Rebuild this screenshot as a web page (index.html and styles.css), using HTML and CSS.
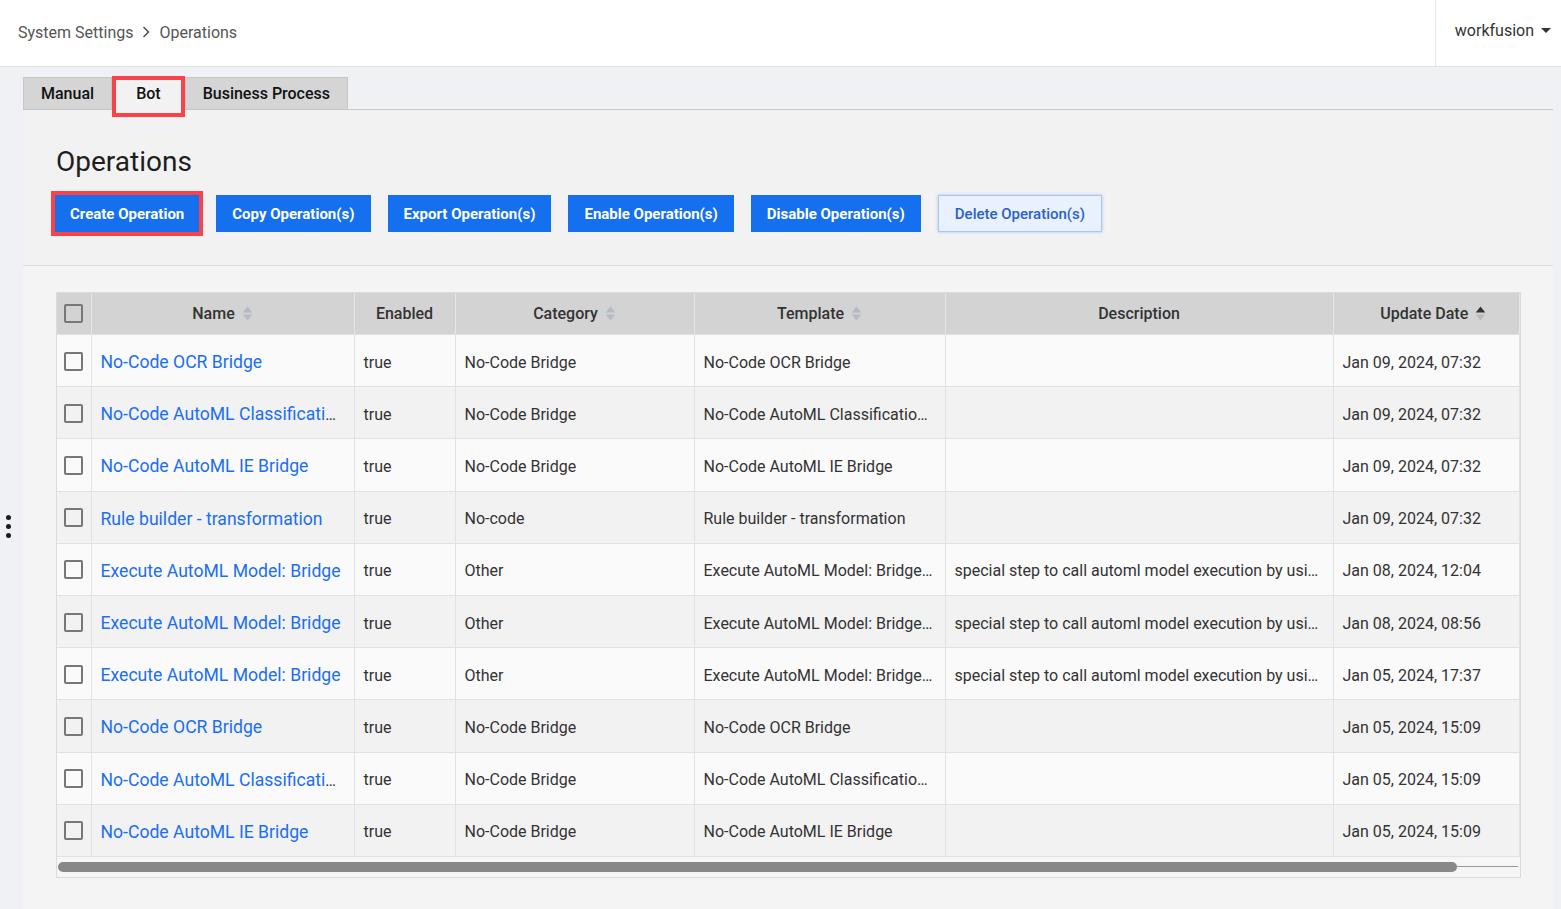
FILE: index.html
```html
<!DOCTYPE html>
<html lang="en">
<head>
    <meta charset="UTF-8">
    <title>Operations - System Settings</title>
    <link rel="stylesheet" href="styles.css">
</head>
<body>
    <header class="topbar">
        <nav class="crumbs">
            <span>System Settings</span>
            <svg class="chevron" viewBox="0 0 8 12"><path d="M1.5 1 6.5 6 1.5 11" fill="none" stroke="#555" stroke-width="1.6"/></svg>
            <span>Operations</span>
        </nav>
        <div class="user">
            <span>workfusion</span>
            <svg class="caret" viewBox="0 0 10 5"><path d="M0 0h10L5 5z" fill="#333"/></svg>
        </div>
    </header>

    <div class="handle"><i></i><i></i><i></i></div>

    <main class="page">
        <div class="tabs">
            <a class="tab">Manual</a>
            <a class="tab tab-active">Bot</a>
            <a class="tab">Business Process</a>
            <div class="tab-fill"></div>
        </div>

        <section class="panel">
            <div class="panel-head">
                <h1>Operations</h1>
                <div class="actions">
                    <button class="btn btn-marked">Create Operation</button>
                    <button class="btn">Copy Operation(s)</button>
                    <button class="btn">Export Operation(s)</button>
                    <button class="btn">Enable Operation(s)</button>
                    <button class="btn">Disable Operation(s)</button>
                    <button class="btn btn-muted">Delete Operation(s)</button>
                </div>
            </div>

            <div class="panel-body">
                <div class="grid">
                    <table>
                        <colgroup>
                            <col class="c-check">
                            <col class="c-name">
                            <col class="c-enabled">
                            <col class="c-category">
                            <col class="c-template">
                            <col class="c-desc">
                            <col>
                        </colgroup>
                        <thead>
                            <tr>
                                <th class="check"><input type="checkbox" class="cb"></th>
                                <th><span class="th-in">Name <svg class="sort" viewBox="0 0 10 16"><path d="M.5 7 5 1.5 9.5 7z"/><path d="M.5 9 5 14.5 9.5 9z"/></svg></span></th>
                                <th>Enabled</th>
                                <th><span class="th-in">Category <svg class="sort" viewBox="0 0 10 16"><path d="M.5 7 5 1.5 9.5 7z"/><path d="M.5 9 5 14.5 9.5 9z"/></svg></span></th>
                                <th><span class="th-in">Template <svg class="sort" viewBox="0 0 10 16"><path d="M.5 7 5 1.5 9.5 7z"/><path d="M.5 9 5 14.5 9.5 9z"/></svg></span></th>
                                <th>Description</th>
                                <th class="th-date"><span class="th-in">Update Date <svg class="sort" viewBox="0 0 10 16"><path class="on" d="M.5 7 5 1.5 9.5 7z"/><path d="M.5 9 5 14.5 9.5 9z"/></svg></span></th>
                            </tr>
                        </thead>
                        <tbody>
                            <tr>
                                <td class="check"><input type="checkbox" class="cb"></td>
                                <td><a class="op-link" href="#">No-Code OCR Bridge</a></td>
                                <td>true</td>
                                <td>No-Code Bridge</td>
                                <td>No-Code OCR Bridge</td>
                                <td></td>
                                <td>Jan 09, 2024, 07:32</td>
                            </tr>
                            <tr>
                                <td class="check"><input type="checkbox" class="cb"></td>
                                <td><a class="op-link" href="#">No-Code AutoML Classification Bridge</a></td>
                                <td>true</td>
                                <td>No-Code Bridge</td>
                                <td>No-Code AutoML Classification Bridge</td>
                                <td></td>
                                <td>Jan 09, 2024, 07:32</td>
                            </tr>
                            <tr>
                                <td class="check"><input type="checkbox" class="cb"></td>
                                <td><a class="op-link" href="#">No-Code AutoML IE Bridge</a></td>
                                <td>true</td>
                                <td>No-Code Bridge</td>
                                <td>No-Code AutoML IE Bridge</td>
                                <td></td>
                                <td>Jan 09, 2024, 07:32</td>
                            </tr>
                            <tr>
                                <td class="check"><input type="checkbox" class="cb"></td>
                                <td><a class="op-link" href="#">Rule builder - transformation</a></td>
                                <td>true</td>
                                <td>No-code</td>
                                <td>Rule builder - transformation</td>
                                <td></td>
                                <td>Jan 09, 2024, 07:32</td>
                            </tr>
                            <tr>
                                <td class="check"><input type="checkbox" class="cb"></td>
                                <td><a class="op-link" href="#">Execute AutoML Model: Bridge</a></td>
                                <td>true</td>
                                <td>Other</td>
                                <td>Execute AutoML Model: Bridge Template</td>
                                <td>special step to call automl model execution by using bridge</td>
                                <td>Jan 08, 2024, 12:04</td>
                            </tr>
                            <tr>
                                <td class="check"><input type="checkbox" class="cb"></td>
                                <td><a class="op-link" href="#">Execute AutoML Model: Bridge</a></td>
                                <td>true</td>
                                <td>Other</td>
                                <td>Execute AutoML Model: Bridge Template</td>
                                <td>special step to call automl model execution by using bridge</td>
                                <td>Jan 08, 2024, 08:56</td>
                            </tr>
                            <tr>
                                <td class="check"><input type="checkbox" class="cb"></td>
                                <td><a class="op-link" href="#">Execute AutoML Model: Bridge</a></td>
                                <td>true</td>
                                <td>Other</td>
                                <td>Execute AutoML Model: Bridge Template</td>
                                <td>special step to call automl model execution by using bridge</td>
                                <td>Jan 05, 2024, 17:37</td>
                            </tr>
                            <tr>
                                <td class="check"><input type="checkbox" class="cb"></td>
                                <td><a class="op-link" href="#">No-Code OCR Bridge</a></td>
                                <td>true</td>
                                <td>No-Code Bridge</td>
                                <td>No-Code OCR Bridge</td>
                                <td></td>
                                <td>Jan 05, 2024, 15:09</td>
                            </tr>
                            <tr>
                                <td class="check"><input type="checkbox" class="cb"></td>
                                <td><a class="op-link" href="#">No-Code AutoML Classification Bridge</a></td>
                                <td>true</td>
                                <td>No-Code Bridge</td>
                                <td>No-Code AutoML Classification Bridge</td>
                                <td></td>
                                <td>Jan 05, 2024, 15:09</td>
                            </tr>
                            <tr>
                                <td class="check"><input type="checkbox" class="cb"></td>
                                <td><a class="op-link" href="#">No-Code AutoML IE Bridge</a></td>
                                <td>true</td>
                                <td>No-Code Bridge</td>
                                <td>No-Code AutoML IE Bridge</td>
                                <td></td>
                                <td>Jan 05, 2024, 15:09</td>
                            </tr>
                        </tbody>
                    </table>
                    <div class="hscroll"><div class="thumb"></div><div class="track"></div></div>
                </div>
            </div>
        </section>
    </main>
</body>
</html>
```

FILE: styles.css
```css
body {
    margin: 0;
    font-family: Roboto, "Liberation Sans", sans-serif;
    font-size: 16px;
    color: #333;
    background: #f0f1f5;
    overflow: hidden;
}

/* top bar */
.topbar {
    height: 66px;
    display: flex;
    background: #fff;
    border-bottom: 1px solid #e3e3e3;
}
.crumbs {
    flex: 1;
    display: flex;
    align-items: center;
    gap: 9px;
    padding: 0 0 2px 18px;
    color: #555;
}
.chevron {
    width: 8px;
    height: 12px;
}
.user {
    display: flex;
    align-items: center;
    gap: 7px;
    padding: 0 10px 6px 19px;
    border-left: 1px solid #e6e6e6;
    color: #333;
}
.caret {
    width: 10px;
    height: 5px;
}

.handle {
    position: absolute;
    left: 6px;
    top: 515px;
    display: flex;
    flex-direction: column;
    gap: 4px;
}
.handle i {
    width: 5px;
    height: 5px;
    border-radius: 50%;
    background: #1c1c1c;
}

/* tabs */
.page {
    padding: 10px 8px 0 23px;
}
.tabs {
    display: flex;
    height: 33px;
}
.tab {
    display: flex;
    align-items: center;
    padding: 0 17px;
    background: #d5d5d5;
    border: 1px solid #c6c6c6;
    color: #111;
    font-weight: 500;
}
.tab-active {
    position: relative;
    padding: 0 23px;
    background: #f2f2f2;
    border-color: #f2f2f2;
}
.tab-active::after {
    content: "";
    position: absolute;
    left: -1px;
    right: -1px;
    top: -2px;
    bottom: -8px;
    border: 4px solid #fb4248;
}
.tab-fill {
    flex: 1;
    border-bottom: 1px solid #c8c8c8;
}

/* panel */
.panel {
    background: #f4f4f4;
    min-height: 800px;
}
.panel-head {
    background: #f2f2f2;
    padding: 35px 33px 33px 32px;
    border-bottom: 1px solid #dcdcdc;
}
h1 {
    margin: 0 0 16px 1px;
    font-size: 28px;
    font-weight: 400;
    line-height: 34px;
    color: #1e1e1e;
}
.actions {
    display: flex;
    gap: 17px;
}
.btn {
    height: 37px;
    padding: 0 16px;
    border: 0;
    background: #1570ef;
    color: #fff;
    font-family: Roboto, "Liberation Sans", sans-serif;
    font-size: 15px;
    font-weight: 700;
}
.btn-marked {
    padding: 0 15px;
    outline: 4px solid #fb4248;
}
.btn-muted {
    background: #e9f1fe;
    color: #2a62c8;
    border: 1px solid #a9c6f6;
    box-shadow: 0 0 3px rgba(80, 140, 240, .45);
    font-weight: 500;
}

.panel-body {
    padding: 26px 32px 30px 33px;
}

/* grid */
.grid {
    border: 1px solid #dcdcdc;
    background: #f6f6f6;
    padding-bottom: 5px;
}
table {
    width: 100%;
    border-collapse: collapse;
    table-layout: fixed;
}
.c-check { width: 34px; }
.c-name { width: 263px; }
.c-enabled { width: 101px; }
.c-category { width: 239px; }
.c-template { width: 251px; }
.c-desc { width: 388px; }

th {
    height: 41px;
    padding: 0 10px;
    background: #d3d3d3;
    border-right: 1px solid #e6e6e6;
    border-bottom: 1px solid #e2e2e2;
    font-weight: 500;
    color: #333;
    text-align: center;
}
th.th-date {
    padding-left: 24px;
}
.th-in {
    display: inline-flex;
    align-items: center;
    gap: 7px;
}
.sort {
    width: 11px;
    height: 17px;
    fill: #b6bbc2;
}
.sort .on {
    fill: #333;
}
td {
    height: 48.2px;
    padding: 3px 10px 0 9px;
    border-right: 1px solid #e2e2e2;
    border-bottom: 1px solid #e2e2e2;
    white-space: nowrap;
    overflow: hidden;
    text-overflow: ellipsis;
    color: #333;
}
tbody tr:nth-child(odd) td {
    background: #fafafa;
}
tbody tr:nth-child(even) td {
    background: #f2f2f2;
}
th.check, td.check {
    padding: 0 0 0 7px;
    text-align: left;
}
td.check {
    padding-top: 1px;
}
.cb {
    appearance: none;
    display: block;
    margin: 0;
    width: 19px;
    height: 19px;
    border: 2px solid #777;
    border-radius: 2px;
    background: transparent;
}
.op-link {
    color: #1a6ef2;
    font-size: 17.6px;
    text-decoration: none;
}

.hscroll {
    display: flex;
    align-items: center;
    height: 10px;
    margin: 5px 2px 0 1px;
}
.thumb {
    flex: 0 0 95.8%;
    height: 10px;
    border-radius: 5px;
    background: #888;
}
.track {
    flex: 1;
    height: 1px;
    background: #999;
}
```
